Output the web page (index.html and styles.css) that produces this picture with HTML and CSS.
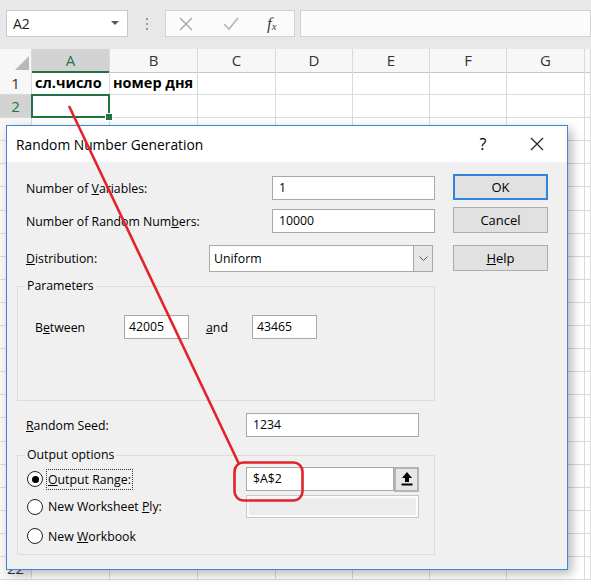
FILE: index.html
```html
<!DOCTYPE html>
<html lang="ru">
<head>
    <meta charset="UTF-8">
    <title>Random Number Generation</title>
    <link rel="stylesheet" href="styles.css">
</head>
<body>
<div class="app">
    <div class="toolbar">
        <div class="name-box">
            <span>A2</span>
            <svg class="nb-arrow" width="8" height="5" viewBox="0 0 8 5"><path d="M0 0h8L4 4z" fill="#555"/></svg>
        </div>
        <div class="grip"><i></i><i></i><i></i></div>
        <div class="fx-buttons">
            <svg width="14" height="14" viewBox="0 0 14 14"><path d="M1 1l12 12M13 1L1 13" stroke="#a6a6a6" stroke-width="1.4"/></svg>
            <svg width="16" height="14" viewBox="0 0 16 14"><path d="M1 7l5 5L15 1" stroke="#b3b3b3" stroke-width="1.6" fill="none"/></svg>
            <span class="fx">f<sub>x</sub></span>
        </div>
        <div class="formula"></div>
    </div>

    <div class="sheet" id="sheet">
        <div class="row head">
            <div class="corner"><svg width="14" height="14" viewBox="0 0 14 14"><path d="M14 0v14H0z" fill="#b9b9b9"/></svg></div>
            <div class="ch sel">A</div>
            <div class="ch">B</div>
            <div class="ch">C</div>
            <div class="ch">D</div>
            <div class="ch">E</div>
            <div class="ch">F</div>
            <div class="ch">G</div>
            <div class="ch"></div>
        </div>
        <div class="row">
            <div class="rh">1</div>
            <div class="cell bold">сл.число</div>
            <div class="cell bold">номер дня</div>
            <div class="cell"></div><div class="cell"></div><div class="cell"></div>
            <div class="cell"></div><div class="cell"></div><div class="cell"></div>
        </div>
        <div class="row">
            <div class="rh sel">2</div>
            <div class="cell active"></div>
            <div class="cell"></div><div class="cell"></div><div class="cell"></div>
            <div class="cell"></div><div class="cell"></div><div class="cell"></div><div class="cell"></div>
        </div>
    </div>

    <div class="dialog">
        <div class="title">
            <span>Random Number Generation</span>
            <span class="title-btn help-btn">?</span>
            <span class="title-btn"><svg width="14" height="14" viewBox="0 0 14 14"><path d="M1 1l12 12M13 1L1 13" stroke="#222" stroke-width="1.2"/></svg></span>
        </div>
        <div class="dlg-body">
            <div class="main">
                <div class="field">
                    <label>Number of <u>V</u>ariables:</label>
                    <div class="input w163">1</div>
                </div>
                <div class="field gap9">
                    <label>Number of Random Num<u>b</u>ers:</label>
                    <div class="input w163">10000</div>
                </div>
                <div class="field gap12 tall">
                    <label><u>D</u>istribution:</label>
                    <div class="select">
                        <span>Uniform</span>
                        <span class="select-btn"><svg width="9" height="5" viewBox="0 0 9 5"><path d="M0.5 0.5l4 4 4-4" stroke="#555" fill="none"/></svg></span>
                    </div>
                </div>

                <fieldset class="group params">
                    <legend>Parameters</legend>
                    <div class="between">
                        <label class="between-label">B<u>e</u>tween</label>
                        <div class="input w65">42005</div>
                        <label class="and"><u>a</u>nd</label>
                        <div class="input w65">43465</div>
                    </div>
                </fieldset>

                <div class="field seed">
                    <label><u>R</u>andom Seed:</label>
                    <div class="input w173">1234</div>
                </div>

                <fieldset class="group output">
                    <legend>Output options</legend>
                    <div class="opt">
                        <span class="radio checked"></span>
                        <label class="focus"><u>O</u>utput Range:</label>
                        <div class="range">
                            <div class="input">$A$2</div>
                            <span class="pick"><svg width="12" height="14" viewBox="0 0 12 14"><path d="M6 0l5 6H8v4H4V6H1z" fill="#000"/><rect x="0.5" y="11.5" width="11" height="2" fill="#000"/></svg></span>
                        </div>
                    </div>
                    <div class="opt opt2">
                        <span class="radio"></span>
                        <label>New Worksheet <u>P</u>ly:</label>
                        <div class="input disabled"></div>
                    </div>
                    <div class="opt opt3">
                        <span class="radio"></span>
                        <label>New <u>W</u>orkbook</label>
                    </div>
                </fieldset>
            </div>

            <div class="buttons">
                <div class="btn default">OK</div>
                <div class="btn">Cancel</div>
                <div class="btn help"><u>H</u>elp</div>
            </div>
        </div>
    </div>

    <svg class="annot" width="591" height="585" viewBox="0 0 591 585">
        <path d="M69 106L239 464" stroke="#e3232b" stroke-width="2.6" fill="none"/>
        <rect x="234.5" y="462.5" width="68" height="38" rx="9" stroke="#e3232b" stroke-width="2.6" fill="none"/>
    </svg>
</div>

<script>
    // пустые строки под диалогом; номер виден только у 22-й
    const sheet = document.getElementById('sheet');
    for (let r = 3; r <= 22; r++) {
        const row = document.createElement('div');
        row.className = 'row';
        let html = `<div class="rh">${r === 22 ? r : ''}</div>`;
        for (let c = 0; c < 8; c++) html += '<div class="cell"></div>';
        row.innerHTML = html;
        sheet.appendChild(row);
    }
</script>
</body>
</html>
```

FILE: styles.css
```css
body {
    margin: 0;
    font-family: "Open Sans", "Noto Sans", sans-serif;
    background-color: #fff;
}
.app {
    position: relative;
    width: 591px;
    height: 585px;
    overflow: hidden;
    background-color: #fff;
}

/* formula bar */
.toolbar {
    height: 49px;
    display: flex;
    align-items: flex-start;
    padding: 10px 0 0 6px;
    box-sizing: border-box;
    background-color: #e8e8e8;
}
.name-box {
    width: 122px;
    height: 27px;
    box-sizing: border-box;
    border: 1px solid #c9c9c9;
    background-color: #fff;
    display: flex;
    align-items: center;
    justify-content: space-between;
    padding: 0 8px 0 6px;
    font-size: 14px;
    color: #222;
}
.grip {
    width: 37px;
    height: 27px;
    display: flex;
    flex-direction: column;
    align-items: center;
    justify-content: center;
    gap: 3px;
}
.grip i {
    width: 2px;
    height: 2px;
    background-color: #9a9a9a;
}
.fx-buttons {
    width: 130px;
    height: 27px;
    box-sizing: border-box;
    border: 1px solid #d2d2d2;
    background-color: #fbfbfb;
    display: flex;
    align-items: center;
    padding-left: 13px;
    gap: 30px;
}
.fx {
    font-family: "Liberation Serif", serif;
    font-style: italic;
    font-size: 17px;
    color: #444;
    margin-left: -2px;
}
.fx sub {
    font-size: 11px;
    vertical-align: -1px;
}
.formula {
    flex: 1;
    height: 27px;
    margin-left: 5px;
    box-sizing: border-box;
    border: 1px solid #d2d2d2;
    background-color: #fbfbfb;
}

/* grid */
.row {
    display: grid;
    grid-template-columns: 32px 78px 88px 78px 77px 77px 77px 78px 1fr;
    height: 23.1px;
}
.row.head {
    height: 23px;
    background-color: #f7f7f7;
}
.row > div {
    box-sizing: border-box;
    border-right: 1px solid #dadada;
    border-bottom: 1px solid #dadada;
}
.corner {
    display: flex;
    align-items: flex-end;
    justify-content: flex-end;
    padding: 0 2px 2px 0;
}
.ch {
    text-align: center;
    font-size: 15px;
    line-height: 22px;
    color: #333;
    border-bottom-color: #c6c6c6 !important;
}
.ch.sel, .rh.sel {
    background-color: #d3d3d3;
    color: #217346;
}
.ch.sel {
    border-bottom: 2px solid #217346 !important;
}
.rh {
    background-color: #f7f7f7;
    text-align: center;
    font-size: 15px;
    line-height: 22px;
    color: #333;
}
.cell {
    font-size: 14.5px;
    line-height: 22px;
    padding-left: 3px;
    white-space: nowrap;
}
.bold {
    font-weight: bold;
}
.cell.active {
    position: relative;
}
.cell.active::after {
    content: "";
    position: absolute;
    left: -1px;
    top: -1px;
    right: -1px;
    bottom: -1px;
    border: 2px solid #217346;
}
.cell.active::before {
    content: "";
    position: absolute;
    right: -4px;
    bottom: -4px;
    width: 6px;
    height: 6px;
    background-color: #217346;
    border: 1px solid #fff;
    z-index: 1;
}

/* dialog */
.dialog {
    position: absolute;
    left: 6px;
    top: 125px;
    width: 562px;
    height: 445px;
    box-sizing: border-box;
    border: 1px solid #3b87d9;
    background-color: #f0f0f0;
    box-shadow: 4px 4px 10px rgba(0, 0, 0, 0.28);
    font-size: 12.3px;
    color: #000;
}
.title {
    height: 36px;
    background-color: #fff;
    display: flex;
    align-items: center;
    padding-left: 9px;
    font-size: 13.8px;
}
.title-btn {
    width: 46px;
    text-align: center;
    display: flex;
    justify-content: center;
}
.help-btn {
    margin-left: auto;
    margin-right: 8px;
    font-size: 16px;
}
.title-btn:last-child {
    margin-right: 7px;
}
.dlg-body {
    display: flex;
    padding: 14px 0 0 10px;
}
.main {
    width: 418px;
}
.field {
    display: flex;
    align-items: center;
    height: 24px;
}
.field > label {
    padding-left: 9px;
}
.field.gap9 {
    margin-top: 9px;
}
.field.gap12 {
    margin-top: 12px;
}
.field.tall {
    height: 27px;
}
.input {
    height: 24px;
    box-sizing: border-box;
    border: 1px solid #a8a8a8;
    background-color: #fff;
    padding-left: 6px;
    line-height: 22px;
}
.field > .input {
    margin-left: auto;
}
.w163 { width: 163px; }
.w65 { width: 65px; padding-left: 4px; }
.w173 { width: 173px; }
.select {
    margin-left: auto;
    margin-right: 2px;
    width: 224px;
    height: 27px;
    box-sizing: border-box;
    border: 1px solid #a8a8a8;
    background-color: #fff;
    display: flex;
    align-items: center;
    justify-content: space-between;
    padding-left: 4px;
}
.select-btn {
    width: 19px;
    height: 25px;
    box-sizing: border-box;
    border-left: 1px solid #a8a8a8;
    background-color: #e6e6e6;
    display: flex;
    align-items: center;
    justify-content: center;
}
.group {
    margin: 0;
    padding: 0;
    border: 1px solid #dcdcdc;
}
.group legend {
    margin-left: 7px;
    padding: 0 2px;
    line-height: 16px;
}
.params {
    margin-top: 6px;
    height: 123px;
    box-sizing: border-box;
}
.between {
    display: flex;
    align-items: center;
    margin-top: 21px;
    height: 24px;
}
.between-label {
    width: 89px;
    padding-left: 17px;
}
.and {
    margin: 0 17px;
    width: 29px;
}
.seed {
    margin-top: 12px;
}
.seed .input {
    margin-right: 16px;
}
.output {
    margin-top: 10px;
    height: 108px;
    box-sizing: border-box;
}
.opt {
    display: flex;
    align-items: center;
    height: 24px;
    padding-left: 9px;
    margin-top: 4px;
}
.opt2 {
    height: 23px;
}
.opt3 {
    margin-top: 6px;
}
.opt label {
    margin-left: 4px;
    padding: 0 1px;
}
.opt label.focus {
    outline: 1px dotted #333;
    line-height: 19px;
}
.radio {
    width: 16px;
    height: 16px;
    box-sizing: border-box;
    border: 1.5px solid #222;
    border-radius: 50%;
    background-color: #fff;
    display: flex;
    align-items: center;
    justify-content: center;
}
.radio.checked::after {
    content: "";
    width: 7px;
    height: 7px;
    border-radius: 50%;
    background-color: #000;
}
.range {
    margin-left: auto;
    margin-right: 15px;
    display: flex;
}
.range .input {
    width: 148px;
}
.pick {
    width: 25px;
    height: 25px;
    box-sizing: border-box;
    border: 2px solid #b4b4b4;
    background-color: #e6e6e6;
    display: flex;
    align-items: center;
    justify-content: center;
}
.input.disabled {
    margin-left: auto;
    margin-right: 15px;
    width: 173px;
    height: 23px;
    background-color: #ececec;
    box-shadow: inset 0 0 0 2px #fbfbfb;
    border-color: #c8c8c8;
}
.buttons {
    margin-left: 18px;
    margin-top: -2px;
    width: 95px;
}
.btn {
    height: 26px;
    box-sizing: border-box;
    border: 1px solid #adadad;
    background-color: #e1e1e1;
    text-align: center;
    line-height: 24px;
    margin-bottom: 7px;
    font-size: 13px;
}
.btn.default {
    border: 2px solid #2f84dc;
    line-height: 22px;
}
.btn.help {
    margin-top: 12px;
}

.annot {
    position: absolute;
    left: 0;
    top: 0;
    pointer-events: none;
}
```
